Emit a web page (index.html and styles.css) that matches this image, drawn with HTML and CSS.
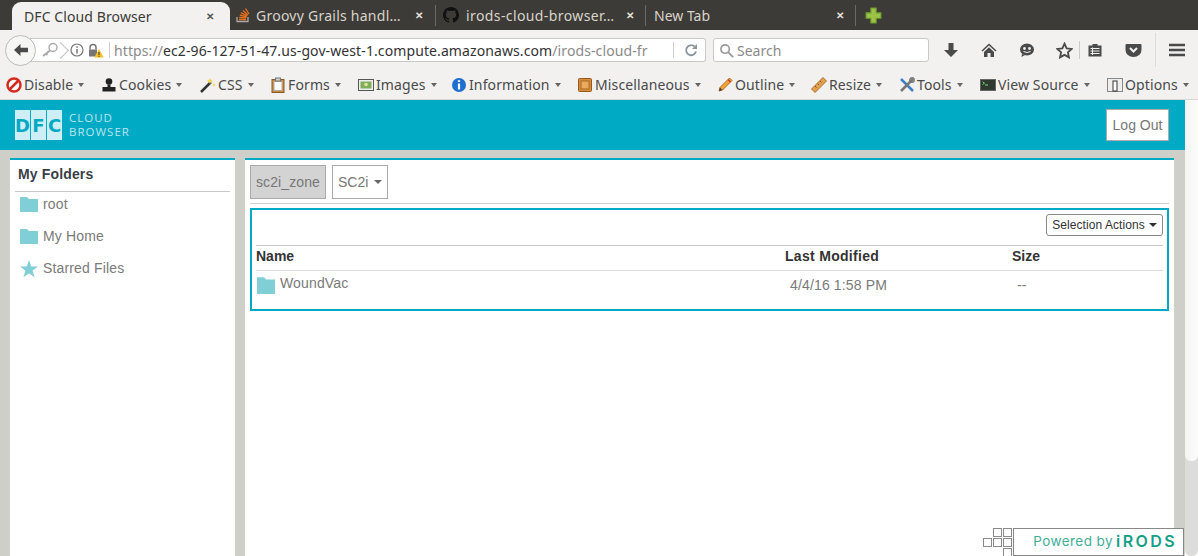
FILE: index.html
```html
<!DOCTYPE html>
<html lang="en">
<head>
<meta charset="utf-8">
<title>DFC Cloud Browser</title>
<link rel="stylesheet" href="styles.css">
</head>
<body>
<div class="tabbar">
  <div class="tab active"><span class="tab-title">DFC Cloud Browser</span><span class="tab-x">✕</span></div>
  <div class="tab t2">
    <svg class="fav" viewBox="0 0 16 16"><path d="M2 10v4.500h11V10" fill="none" stroke="#aaa" stroke-width="1.300"/><path d="M4 12.500h7M4.200 10.300l7 .6M4.800 8l6.800 1.800M6 5.700l6.200 3.200M8 3.500l5 4.500M10.500 1.500l3.500 5.500" stroke="#e8701a" stroke-width="1.300" fill="none"/></svg>
    <span class="tab-title">Groovy Grails handl…</span><span class="tab-x">✕</span></div>
  <div class="tab t3 sep">
    <svg class="fav" viewBox="0 0 16 16"><path fill="#111" d="M8 0C3.600 0 0 3.600 0 8c0 3.500 2.300 6.500 5.500 7.600.4.100.5-.2.500-.4v-1.400c-2.200.5-2.700-1-2.700-1-.4-.9-.9-1.200-.9-1.200-.7-.5.100-.5.100-.5.800.1 1.200.8 1.200.8.700 1.200 1.900.9 2.300.7.100-.5.300-.9.500-1.100-1.800-.2-3.600-.9-3.600-4 0-.9.300-1.600.8-2.100-.1-.2-.4-1 .1-2.100 0 0 .7-.2 2.200.8.600-.2 1.300-.3 2-.3s1.400.1 2 .3c1.500-1 2.200-.8 2.200-.8.400 1.100.2 1.900.1 2.100.5.600.8 1.300.8 2.100 0 3.100-1.900 3.700-3.700 3.900.3.300.6.800.6 1.500v2.200c0 .2.100.5.600.4C13.700 14.500 16 11.500 16 8c0-4.400-3.600-8-8-8z"/></svg>
    <span class="tab-title">irods-cloud-browser…</span><span class="tab-x">✕</span></div>
  <div class="tab t4 sep"><span class="tab-title">New Tab</span><span class="tab-x">✕</span></div>
  <div class="newtab sep">
    <svg viewBox="0 0 16 16" width="17" height="17"><path d="M5.500 1h5v4.500H15v5h-4.500V15h-5v-4.500H1v-5h4.500z" fill="#9cc247" stroke="#6f9a2c"/></svg>
  </div>
</div>

<div class="navbar">
  <div class="back"><svg viewBox="0 0 16 16" width="16" height="16"><path d="M1 8l6.500-6v3.800H15v4.400H7.500V14z" fill="#4a4a4a"/></svg></div>
  <div class="urlbar">
    <svg class="ico-key" viewBox="0 0 18 16" width="18" height="16"><circle cx="12" cy="5.500" r="4" fill="none" stroke="#aaa" stroke-width="1.400"/><path d="M9 8.500L2 14M5 11.500l1.500 1.500" stroke="#aaa" stroke-width="2" fill="none"/></svg>
    <span class="chev"></span>
    <svg class="ico-info" viewBox="0 0 14 14" width="14" height="14"><circle cx="7" cy="7" r="6" fill="none" stroke="#777" stroke-width="1.200"/><path d="M7 6v4.500M7 3.200v1.600" stroke="#777" stroke-width="1.500"/></svg>
    <svg class="ico-lock" viewBox="0 0 16 15" width="16" height="15"><path d="M2 6.500V4.500a3 3 0 0 1 6 0v2" fill="none" stroke="#777" stroke-width="1.500"/><rect x="1" y="6.500" width="8" height="7" fill="#777"/><path d="M11 6l4.800 8.500H6.200z" fill="#f6c02c"/><path d="M11 9v3M11 12.800v1" stroke="#333"/></svg>
    <span class="urlsep"></span>
    <span class="url"><span class="dim">https://</span>ec2-96-127-51-47.us-gov-west-1.compute.amazonaws.com<span class="dim">/irods-cloud-fr</span></span>
    <span class="urlsep2"></span>
    <svg class="ico-reload" viewBox="0 0 14 14" width="14" height="14"><path d="M12 8.500a5 5 0 1 1-1.500-5" fill="none" stroke="#8a949b" stroke-width="1.800"/><path d="M13 1v5H8z" fill="#8a949b"/></svg>
  </div>
  <div class="searchbar">
    <svg viewBox="0 0 16 16" width="15" height="15"><circle cx="6.500" cy="6.500" r="4.500" fill="none" stroke="#999" stroke-width="1.700"/><path d="M10 10l5 5" stroke="#999" stroke-width="2"/></svg>
    <span>Search</span>
  </div>
  <div class="nav-icons">
    <svg class="i1" viewBox="0 0 16 16" width="16" height="16"><path d="M5.500 1h5v7H15l-7 7-7-7h4.500z" fill="#4a4a4a"/></svg>
    <svg class="i2" viewBox="0 0 16 16" width="16" height="16"><path d="M8 1.500L0.500 8.500l1 1L8 3.500l6.500 6 1-1zM3 10v5h3.500v-4h3v4H13v-5L8 5.300z" fill="#4a4a4a"/></svg>
    <svg class="i3" viewBox="0 0 16 16" width="16" height="16"><ellipse cx="8" cy="7.500" rx="7" ry="6" fill="#4a4a4a"/><path d="M3 12l-.5 3 3.500-2z" fill="#4a4a4a"/><circle cx="5.500" cy="6.500" r="1.400" fill="#eee"/><circle cx="10.500" cy="6.500" r="1.400" fill="#eee"/><path d="M4.500 9.500q3.500 2 7 0" stroke="#eee" fill="none"/></svg>
    <svg class="i4" viewBox="0 0 16 16" width="17" height="17"><path d="M8 1.500l2 4.500 4.800.5-3.600 3.200 1 4.800L8 12.100l-4.200 2.400 1-4.800L1.200 6.500 6 6z" fill="none" stroke="#4a4a4a" stroke-width="1.700"/></svg>
    <span class="i-sep"></span>
    <svg class="i5" viewBox="0 0 16 16" width="16" height="16"><path d="M1.500 3.500h4V2h5v1.500h4v11h-13z" fill="#4a4a4a"/><path d="M3.500 6.500h9M3.500 9h9M3.500 11.500h9M5.500 5.500v7.500" stroke="#f2f2f0"/></svg>
    <svg class="i6" viewBox="0 0 16 16" width="17" height="16"><path d="M1 2h14a1 1 0 0 1 1 1v5a8 7 0 0 1-16 0V3a1 1 0 0 1 1-1z" fill="#4a4a4a"/><path d="M4.500 6L8 9.500 11.500 6" stroke="#f2f2f0" stroke-width="2" fill="none"/></svg>
    <span class="i-sep2"></span>
    <svg class="i7" viewBox="0 0 16 14" width="16" height="14"><path d="M0 2h16M0 7h16M0 12h16" stroke="#4a4a4a" stroke-width="2.400"/></svg>
  </div>
</div>

<div class="devbar">
  <span class="dev w-disable"><svg viewBox="0 0 16 16" width="16" height="16"><circle cx="8" cy="8" r="6.500" fill="#fff" stroke="#d42a20" stroke-width="2.500"/><path d="M3.500 12.500l9-9" stroke="#d42a20" stroke-width="2.500"/></svg>Disable<i></i></span>
  <span class="dev w-cookies"><svg viewBox="0 0 16 16" width="16" height="16"><circle cx="8" cy="4.500" r="3.300" fill="#222"/><path d="M6.500 7.500h3V10H14.500v4.500h-13V10h5z" fill="#222"/></svg>Cookies<i></i></span>
  <span class="dev w-css"><svg viewBox="0 0 16 16" width="16" height="16"><path d="M1 15L11 5" stroke="#333" stroke-width="2.500"/><path d="M11 5l3-3" stroke="#eee" stroke-width="2"/><path d="M10 1l1 2 2 1-2 1-1 2-1-2-2-1 2-1z" fill="#f1d64c"/><path d="M14 6l.6 1.400L16 8l-1.400.6L14 10l-.6-1.400L12 8l1.400-.6z" fill="#f1d64c"/></svg>CSS<i></i></span>
  <span class="dev w-forms"><svg viewBox="0 0 16 16" width="16" height="16"><rect x="2" y="2.500" width="12" height="13" fill="#cf8a3c" stroke="#8c5a22"/><rect x="4" y="4.500" width="8" height="9" fill="#fff" stroke="#aaa"/><rect x="5.500" y="1" width="5" height="3" fill="#ccc" stroke="#777"/></svg>Forms<i></i></span>
  <span class="dev w-images"><svg viewBox="0 0 16 16" width="16" height="16"><rect x=".5" y="2.500" width="15" height="11" fill="#eee" stroke="#555"/><rect x="2.500" y="4.500" width="11" height="7" fill="#7fae5a"/><circle cx="8" cy="7.500" r="1.800" fill="#eadf9a"/></svg>Images<i></i></span>
  <span class="dev w-info"><svg viewBox="0 0 16 16" width="16" height="16"><circle cx="8" cy="8" r="7" fill="#1f6fd0"/><path d="M8 6.500v6M8 3.200v1.800" stroke="#fff" stroke-width="2.200"/></svg>Information<i></i></span>
  <span class="dev w-misc"><svg viewBox="0 0 16 16" width="16" height="16"><rect x="1.500" y="1.500" width="13" height="13" rx="1" fill="#d98d3a" stroke="#96591a"/><rect x="4" y="4" width="8" height="8" fill="#e8ab5f" stroke="#a8682a"/></svg>Miscellaneous<i></i></span>
  <span class="dev w-outline"><svg viewBox="0 0 16 16" width="16" height="16"><path d="M2 14l1-3.500L12.500 1 15 3.500 5.500 13z" fill="#f0a635" stroke="#b5661d"/><path d="M2 14l1-3.500 2.500 2.500z" fill="#444"/><path d="M11 2.500L13.500 5" stroke="#d8352a" stroke-width="1.500"/></svg>Outline<i></i></span>
  <span class="dev w-resize"><svg viewBox="0 0 16 16" width="16" height="16"><path d="M.5 12L12 .5l3.500 3.500L4 15.500z" fill="#e0a050" stroke="#b06f2a"/><path d="M4 9l1.500 1.500M6.500 6.500L8 8M9 4l1.500 1.500" stroke="#8a5520"/></svg>Resize<i></i></span>
  <span class="dev w-tools"><svg viewBox="0 0 16 16" width="16" height="16"><path d="M2 2l12 12" stroke="#3b7fc4" stroke-width="2.500"/><path d="M14 2L2 14" stroke="#777" stroke-width="2.500"/><circle cx="13" cy="3" r="2.200" fill="none" stroke="#777" stroke-width="1.400"/></svg>Tools<i></i></span>
  <span class="dev w-source"><svg viewBox="0 0 16 16" width="16" height="16"><rect x=".5" y="2.500" width="15" height="11" fill="#2e3a30" stroke="#666"/><path d="M2.500 5l2 1.200-2 1.200M5 8h3" stroke="#7ee07e"/></svg>View Source<i></i></span>
  <span class="dev"><svg viewBox="0 0 16 16" width="16" height="16"><rect x=".5" y="1.500" width="15" height="13" fill="#eee" stroke="#888"/><rect x="6" y="4" width="4" height="10" fill="#fff" stroke="#333"/></svg>Options<i></i></span>
</div>

<div class="viewport">
  <div class="page">
    <header class="appbar">
      <div class="logo">
        <div class="logo-mark"><span>D</span><span>F</span><span>C</span></div>
        <div class="logo-text">CLOUD<br>BROWSER</div>
      </div>
      <button class="logout">Log Out</button>
    </header>
    <div class="content">
      <aside class="sidebar">
        <h2>My Folders</h2>
        <a class="side-item"><svg class="folder" viewBox="0 0 18 16"><path d="M0 1h7l2 2h9v13H0z" fill="#80ced6"/></svg>root</a>
        <a class="side-item"><svg class="folder" viewBox="0 0 18 16"><path d="M0 1h7l2 2h9v13H0z" fill="#80ced6"/></svg>My Home</a>
        <a class="side-item"><svg class="star" viewBox="0 0 18 18"><path d="M9 0l2.300 6.500H18l-5.400 4 2 6.800L9 13.300l-5.600 4 2-6.800L0 6.500h6.700z" fill="#80ced6"/></svg>Starred Files</a>
      </aside>
      <main class="panel">
        <div class="crumbs">
          <span class="crumb zone">sc2i_zone</span>
          <span class="crumb">SC2i<i></i></span>
        </div>
        <section class="listing">
          <div class="actions"><button class="sel">Selection Actions<i></i></button></div>
          <div class="row head"><span class="c-name">Name</span><span class="c-mod">Last Modified</span><span class="c-size">Size</span></div>
          <div class="row item">
            <span class="c-name"><svg class="big" viewBox="0 0 18 16" preserveAspectRatio="none"><path d="M0 1h7l2 2h9v13H0z" fill="#80ced6"/></svg>WoundVac</span>
            <span class="c-mod">4/4/16 1:58 PM</span><span class="c-size">--</span>
          </div>
        </section>
      </main>
    </div>
    <div class="powered">
      <svg class="squares" viewBox="0 0 30 30" width="30" height="30"><g fill="#fff" stroke="#8a8a8a"><rect x="10.500" y=".5" width="8" height="8"/><rect x="20.500" y=".5" width="8" height="8"/><rect x=".5" y="10.500" width="8" height="8"/><rect x="10.500" y="10.500" width="8" height="8"/><rect x="20.500" y="10.500" width="8" height="8"/><rect x="20.500" y="20.500" width="8" height="8"/></g></svg>
      <div class="pw-box"><span class="pw-by">Powered by</span><b>iRODS</b></div>
    </div>
  </div>
  <div class="scrollbar"><div class="thumb"></div></div>
</div>
</body>
</html>
```
FILE: styles.css
```css
* { box-sizing: border-box; }
html, body { margin: 0; height: 556px; overflow: hidden; }
body { width: 1198px; background: #fff; font-family: "Liberation Sans", Arial, sans-serif; display: flex; flex-direction: column; }
svg { flex: none; display: block; }

.tabbar { height: 30px; background: #3c3b37; display: flex; align-items: center; font: 14px "Noto Sans", sans-serif; color: #d8d4ca; flex: none; }
.tab { height: 30px; display: flex; align-items: center; position: relative; }
.tab-x { font-size: 10px; font-weight: 700; color: #e4e2dc; position: absolute; }
.tab.active { width: 218px; margin-left: 12px; padding-left: 12px; margin-top: 2px; height: 28px; background: #f2f1f0; border-radius: 9px 9px 0 0; color: #3c3b37; }
.active .tab-title { letter-spacing: .1px; }
.active .tab-x { left: 194px; color: #555; }
.t2 { width: 205px; padding-left: 5px; }
.t2 .tab-x { left: 185px; }
.t2 .tab-title { letter-spacing: .25px; }
.t3 { width: 210px; padding-left: 8px; }
.t3 .tab-x { left: 191px; }
.t3 .tab-title { letter-spacing: .4px; }
.t4 { width: 210px; padding-left: 9px; }
.t4 .tab-x { left: 191px; }
.t2 .fav { margin-right: 5px; }
.t3 .fav { margin-right: 7px; }
.fav { width: 16px; height: 16px; }
.sep::before { content: ""; position: absolute; left: 0; top: 5px; bottom: 4px; width: 1px; background: #6b6a66; }
.newtab { width: 30px; height: 30px; display: flex; align-items: center; padding-left: 10px; position: relative; }

.navbar { height: 38px; background: #f2f1f0; display: flex; align-items: center; padding: 2px 0 0 5px; flex: none; }
.back { width: 31px; height: 31px; border: 1px solid #bbb; border-radius: 50%; background: #f6f6f5; display: flex; align-items: center; justify-content: center; position: relative; z-index: 1; }
.urlbar { width: 676px; height: 24px; margin-left: -6px; background: #fff; border: 1px solid #c9c9c6; border-left: 0; border-radius: 0 3px 3px 0; display: flex; align-items: center; font: 14px "Noto Sans", sans-serif; color: #333; white-space: nowrap; }
.ico-key { margin-left: 11px; }
.chev { width: 11px; height: 11px; border-top: 1px solid #c4c4c4; border-right: 1px solid #c4c4c4; transform: rotate(45deg) scale(1.1); margin-left: -4px; }
.ico-info { margin-left: 4px; }
.ico-lock { margin-left: 4px; }
.urlsep { width: 1px; height: 16px; background: #ccc; margin: 0 4px 0 5px; }
.url { width: 537px; overflow: hidden; letter-spacing: .1px; }
.dim { color: #8a8a8a; }
.urlsep2 { width: 1px; height: 16px; background: #ccc; margin-left: 22px; }
.ico-reload { margin-left: 10px; }
.searchbar { width: 216px; height: 24px; margin-left: 7px; background: #fff; border: 1px solid #c9c9c6; border-radius: 3px; display: flex; align-items: center; gap: 3px; padding-left: 5px; font: 14px "Noto Sans", sans-serif; color: #8a8a8a; }
.nav-icons { display: flex; align-items: center; position: relative; height: 30px; margin-left: 14px; }
.i2 { margin-left: 22px; }
.i3 { margin-left: 22px; }
.i4 { margin-left: 21px; }
.i-sep { width: 1px; height: 18px; background: #ccc; margin-left: 6px; }
.i5 { margin-left: 7px; }
.i6 { margin-left: 22px; }
.i-sep2 { width: 1px; height: 34px; background: #ddd; margin-left: 13px; }
.i7 { margin-left: 13px; }

.devbar { height: 32px; background: #f2f1f0; border-bottom: 1px solid #d6d6d3; display: flex; align-items: center; padding: 2px 0 0 6px; font: 14px "Noto Sans", sans-serif; letter-spacing: .12px; color: #4a4a4a; flex: none; }
.dev { display: flex; align-items: center; white-space: nowrap; }
.dev svg { margin-right: 2px; }
.dev i { display: inline-block; border: 3.500px solid transparent; border-top: 4px solid #666; border-bottom: 0; margin-left: 5px; }
.w-disable { width: 95px; }
.w-cookies { width: 99px; }
.w-css { width: 70px; }
.w-forms { width: 88px; }
.w-images { width: 93px; }
.w-info { width: 126px; }
.w-misc { width: 140px; }
.w-outline { width: 94px; }
.w-resize { width: 88px; }
.w-tools { width: 81px; }
.w-source { width: 127px; }

.viewport { flex: 1; display: flex; min-height: 0; }
.page { width: 1185px; position: relative; background: #cfcfca; display: flex; flex-direction: column; }
.appbar { height: 50px; background: #00a9c4; display: flex; align-items: center; justify-content: space-between; padding: 0 16px 0 15px; flex: none; }
.logo { display: flex; align-items: center; gap: 7px; }
.logo-mark { display: flex; gap: 1px; }
.logo-mark span { width: 15px; height: 30px; background: #cdeef4; color: #00a9c4; font: 700 18px/31px "DejaVu Sans", sans-serif; text-align: center; overflow: hidden; }
.logo-text { font: 11.500px/14px "Open Sans", sans-serif; color: #b8e6ee; letter-spacing: 1px; }
.logout { height: 32px; width: 63px; background: #fff; border: 1px solid #aaa; font: 14px "Liberation Sans", sans-serif; color: #777; padding: 0; }

.content { flex: 1; display: flex; gap: 10px; padding: 8px 10px 0; min-height: 0; }
.sidebar { width: 225px; background: #fff; border-top: 2px solid #00a9c4; padding: 0 5px; flex: none; }
.sidebar h2 { margin: 0; height: 32px; padding: 6px 3px 0; font: 700 14px/16px "Liberation Sans", sans-serif; letter-spacing: .15px; color: #3a3f48; border-bottom: 1px solid #c9c9c9; }
.side-item { display: flex; align-items: center; height: 32px; padding: 0 0 8px 5px; font-size: 14px; letter-spacing: .15px; color: #7a7a7a; gap: 5px; }
.folder { width: 18px; height: 16px; }
.star { width: 18px; height: 18px; margin-top: 2px; }
.panel { width: 929px; background: #fff; border-top: 2px solid #00a9c4; padding: 0 5px; flex: none; }
.crumbs { height: 44px; display: flex; align-items: flex-start; gap: 6px; padding-top: 5px; border-bottom: 1px solid #d2d2d2; margin-bottom: 4px; }
.crumb { height: 34px; border: 1px solid #aaa; background: #fff; font-size: 14px; line-height: 32px; color: #777; padding: 0 5px; display: flex; align-items: center; }
.zone { background: #d3d3d3; width: 76px; letter-spacing: .1px; white-space: nowrap; }
.crumb i, .sel i { display: inline-block; border: 4px solid transparent; border-top: 4px solid #666; border-bottom: 0; margin-left: 6px; }
.listing { height: 103px; border: 2px solid #00a9c4; padding: 0 4px; }
.actions { height: 35px; display: flex; justify-content: flex-end; padding-top: 4px; }
.sel { height: 22px; width: 117px; padding: 0; background: #fff; border: 1px solid #888; border-radius: 3px; font: 12px "Liberation Sans", sans-serif; letter-spacing: .07px; color: #333; white-space: nowrap; }
.sel i { border-top-color: #333; margin-left: 4px; vertical-align: 2px; }
.row { display: flex; }
.row > span { display: block; }
.c-name { width: 529px; }
.c-mod { width: 227px; }
.head { height: 26px; border-top: 1px solid #c9c9c9; border-bottom: 1px solid #ddd; font-weight: 700; font-size: 14px; line-height: 20px; color: #333; }
.head .c-mod { letter-spacing: .3px; }
.item { font-size: 14px; letter-spacing: .15px; color: #7a7a7a; }
.item .c-name { display: flex; gap: 5px; line-height: 24px; padding-left: 1px; }
.big { width: 18px; height: 18px; margin-top: 5px; }
.item .c-mod { padding: 6px 0 0 5px; }
.item .c-size { padding: 6px 0 0 5px; }

.powered { position: absolute; left: 983px; bottom: 0; display: flex; align-items: flex-start; height: 28px; }
.pw-box { width: 171px; height: 28px; background: #fff; border: 1px solid #888; display: flex; justify-content: flex-end; align-items: center; gap: 3px; padding: 0 8px 2px 0; }
.pw-by { font: 13.500px "Inter", sans-serif; letter-spacing: .45px; color: #3fae98; }
.pw-box b { font: 600 16px "Inter", sans-serif; color: #14a088; letter-spacing: 2.400px; margin-right: -2px; }

.scrollbar { width: 13px; background: #dcdcda; border-radius: 6px; }
.thumb { height: 361px; background: linear-gradient(90deg, #f4f4f3, #fbfbfa); border-radius: 0 0 6px 6px; }
```
